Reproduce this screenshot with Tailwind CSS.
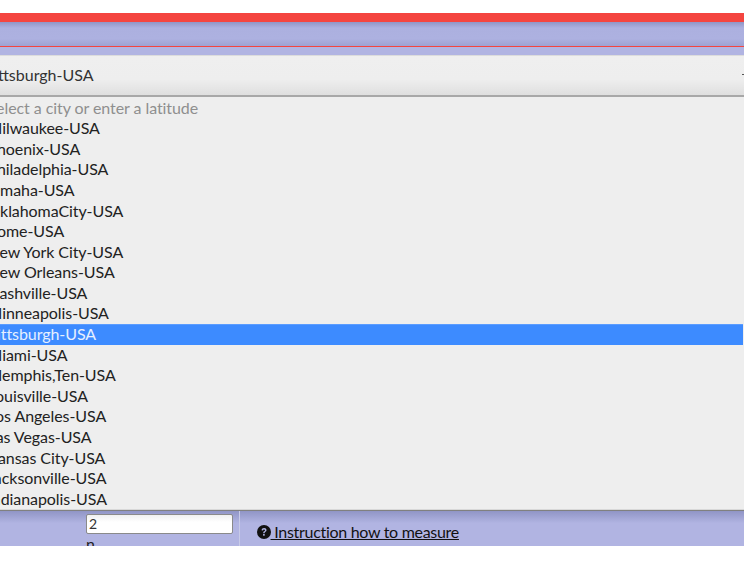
<!DOCTYPE html>
<html><head><meta charset="utf-8"><script src="https://cdn.jsdelivr.net/npm/@tailwindcss/browser@4"></script></head>
<body class="bg-white overflow-hidden">
<div class="w-[744px] h-[567px] overflow-hidden font-['Lato',sans-serif] text-[16px] text-[#333]">
  <div class="h-[13px] bg-white"></div>
  <div class="h-[9px] bg-[#f44540]"></div>
  <div class="h-[24px] bg-[linear-gradient(#9095c6,#acb0df_25%,#adb1e0_70%,#9ea2d2)]"></div>
  <div class="h-[1px] bg-[#f44540]"></div>
  <div class="h-[8px] bg-[#b1b4e2]"></div>
  <div class="h-[42px] flex items-center justify-between pb-[2px] border-t border-[#dcdcdc] border-b-2 border-b-[#a8a8a8] bg-[linear-gradient(#efefef,#eeeeee_60%,#dfdfdf)]">
    <span class="-ml-[15.5px] text-[#333]">Pittsburgh-USA</span>
    <span class="w-[2px] h-[1px] bg-[#555]"></span>
  </div>
  <div class="h-[413px] bg-[#eeeeee] border-b border-[#d8d8d8] leading-[20.58px] tracking-[-0.07px] text-[#222] pt-[0.7px]">
    <div class="-ml-[12.5px] text-[#8f8f8f]">Select a city or enter a latitude</div>
    <div class="-ml-[12.5px]">Milwaukee-USA</div>
    <div class="-ml-[12.5px]">Phoenix-USA</div>
    <div class="-ml-[12.5px]">Philadelphia-USA</div>
    <div class="-ml-[12.5px]">Omaha-USA</div>
    <div class="-ml-[12.5px]">OklahomaCity-USA</div>
    <div class="-ml-[12.5px]">Rome-USA</div>
    <div class="-ml-[12.5px]">New York City-USA</div>
    <div class="-ml-[12.5px]">New Orleans-USA</div>
    <div class="-ml-[12.5px]">Nashville-USA</div>
    <div class="-ml-[12.5px]">Minneapolis-USA</div>
    <div class="-ml-[12.5px] mr-[1.5px] bg-[#3d8bff] text-[#e6f0ff] shadow-[inset_0_1px_#5a9cff]">Pittsburgh-USA</div>
    <div class="-ml-[12.5px]">Miami-USA</div>
    <div class="-ml-[12.5px]">Memphis,Ten-USA</div>
    <div class="-ml-[12.5px]">Louisville-USA</div>
    <div class="-ml-[12.5px]">Los Angeles-USA</div>
    <div class="-ml-[12.5px]">Las Vegas-USA</div>
    <div class="-ml-[12.5px]">Kansas City-USA</div>
    <div class="-ml-[12.5px]">Jacksonville-USA</div>
    <div class="-ml-[12.5px]">Indianapolis-USA</div>
  </div>
  <div class="h-[36px] flex border-t border-t-[#808080] bg-[linear-gradient(#9095c6,#b1b4e2_35%)]">
    <div class="w-[240px] pl-[86px] pt-[3px] border-r border-[#c8cbe8] overflow-hidden shrink-0">
      <div class="w-[147px] h-[20px] bg-[linear-gradient(#f0f0f0,#ffffff_40%)] border border-[#8a8a8a] rounded-[2px] text-[14px] leading-[18px] pl-[2px] text-[#333]">2</div>
      <div class="leading-[20px] text-[#222]">n</div>
    </div>
    <div class="pl-[17px] pt-[16px] flex items-center h-[26px] text-[#111] tracking-[-0.3px]">
      <svg class="w-[14px] h-[14px] shrink-0" viewBox="0 0 14 14"><circle cx="7" cy="7" r="7" fill="#111"/><path d="M4.6 5.3C4.7 3.9 5.7 3.1 7.1 3.1c1.4 0 2.4.8 2.4 2 0 1-.6 1.5-1.2 1.9-.5.3-.7.6-.7 1.2H6.2c0-1 .4-1.5 1-1.9.5-.3.8-.6.8-1.1 0-.5-.4-.8-1-.8-.6 0-1 .4-1.1 1Z" fill="#b1b4e2"/><rect x="6.1" y="9" width="1.6" height="1.7" fill="#b1b4e2"/></svg>
      <span class="underline whitespace-pre -ml-[0.5px]"> Instruction how to measure</span>
    </div>
  </div>
</div>
</body></html>
